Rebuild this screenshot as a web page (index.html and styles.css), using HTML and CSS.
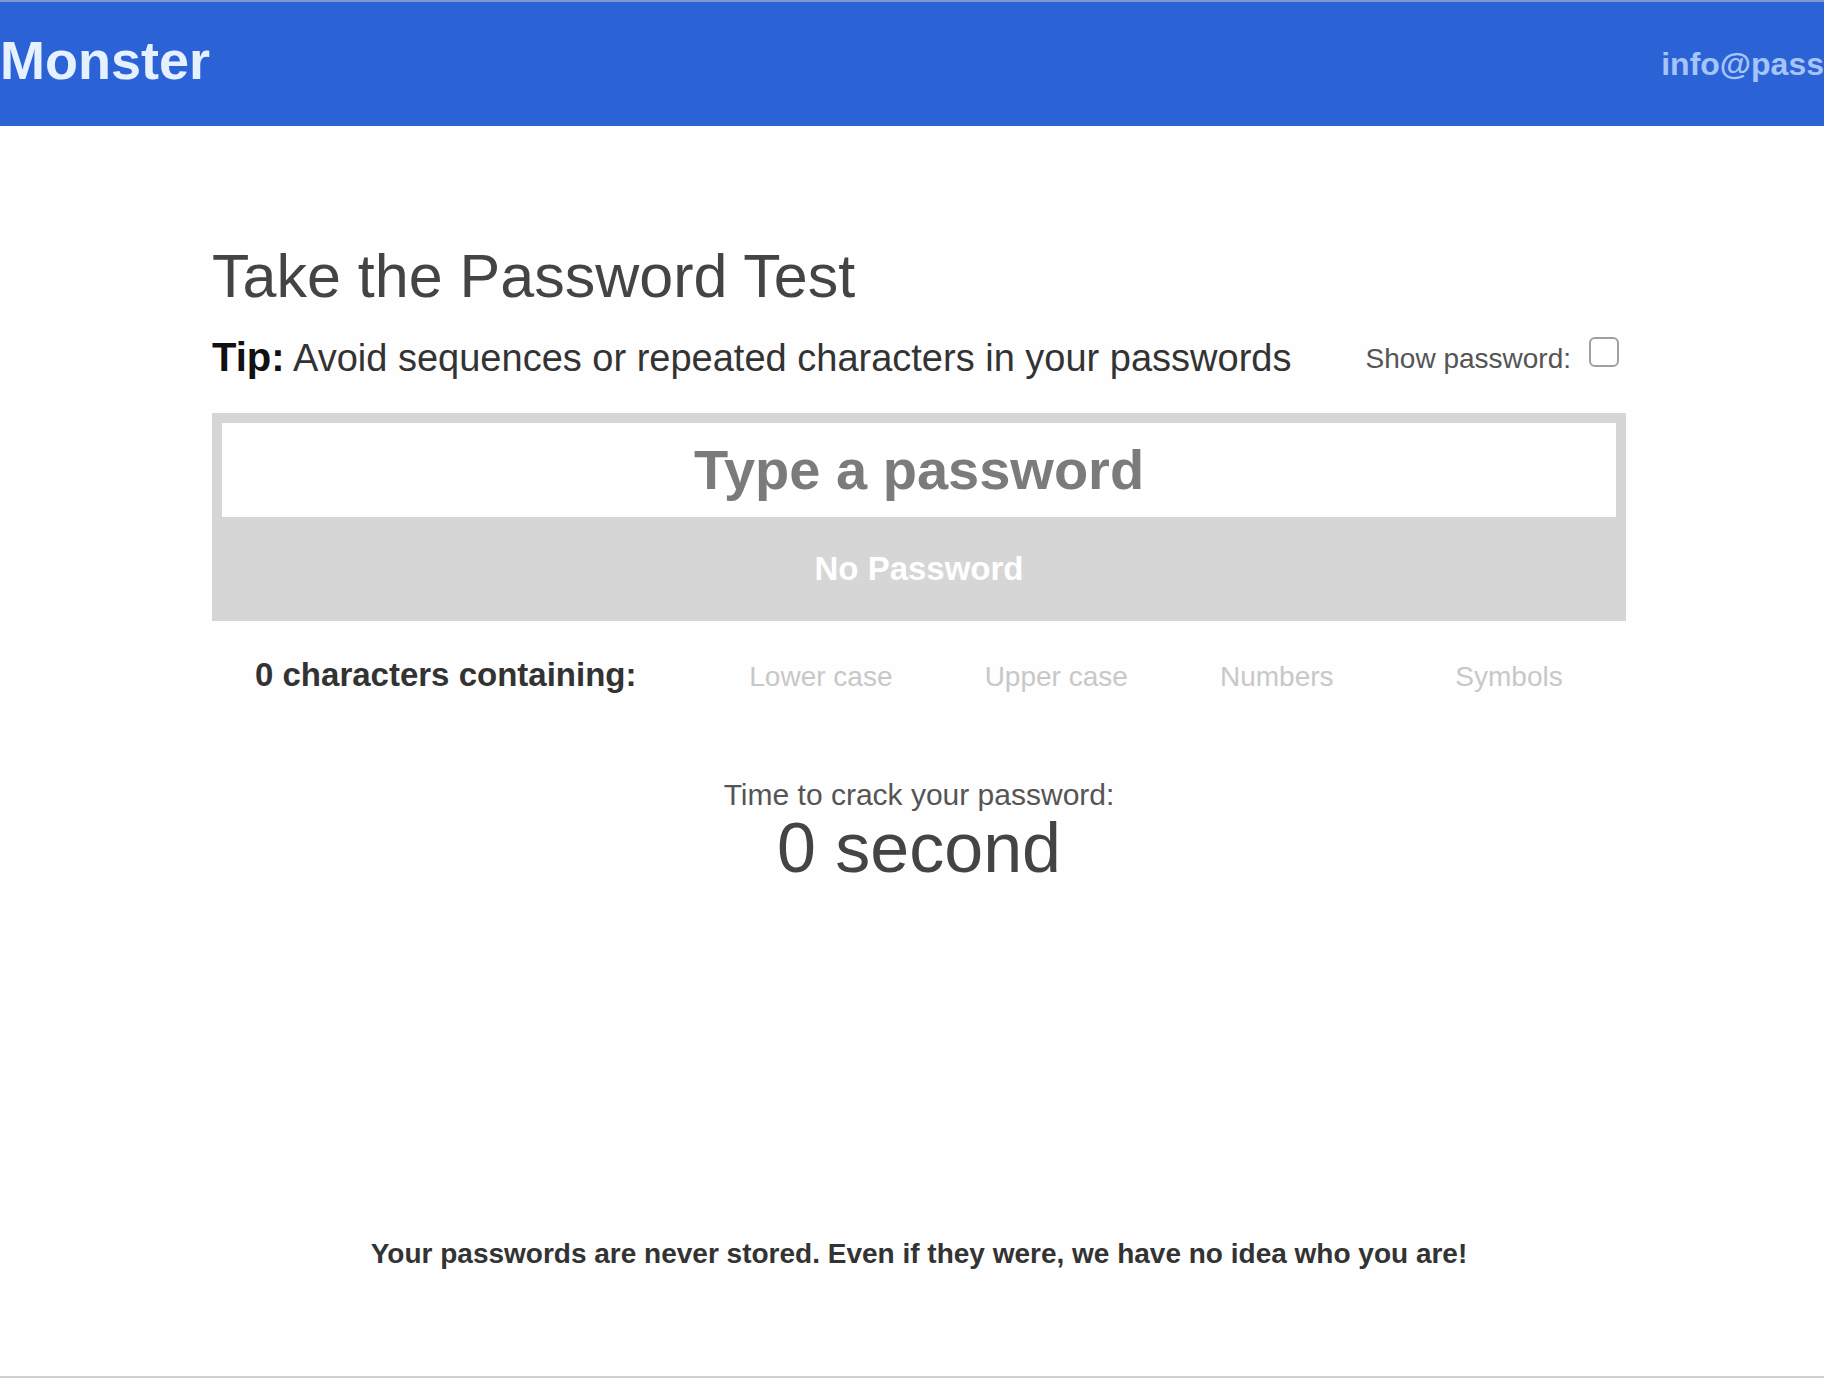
FILE: index.html
```html
<!DOCTYPE html>
<html lang="en">

<head>
    <meta charset="UTF-8">
    <meta name="viewport" content="width=device-width, initial-scale=1.0">
    <title>Password Monster</title>
    <link rel="stylesheet" href="styles.css">
</head>

<body>
    <header class="header">
        <a class="logo" href="#">Monster</a>
        <a class="contact" href="#">info@pass</a>
    </header>

    <main class="content">
        <h1 class="heading">Take the Password Test</h1>

        <div class="tip-row">
            <p class="tip"><strong>Tip:</strong> Avoid sequences or repeated characters in your passwords</p>
            <label class="show-password" for="show">
                Show password:
                <input type="checkbox" class="checkbox" id="show">
            </label>
        </div>

        <div class="meter">
            <input type="password" class="password" id="password" placeholder="Type a password" aria-label="Type a password">
            <div class="strength">No Password</div>
        </div>

        <div class="stats">
            <strong class="count">0 characters containing:</strong>
            <span>Lower case</span>
            <span>Upper case</span>
            <span>Numbers</span>
            <span>Symbols</span>
        </div>

        <div class="result">
            <p class="result-label">Time to crack your password:</p>
            <p class="result-time">0 second</p>
        </div>

        <p class="note">Your passwords are never stored. Even if they were, we have no idea who you are!</p>
    </main>
</body>

</html>
```

FILE: styles.css
```css
* {
    margin: 0;
    padding: 0;
    box-sizing: border-box;
}

body {
    display: flex;
    flex-direction: column;
    min-height: 100vh;
    overflow-x: hidden;
    font-family: "Liberation Sans", Arial, sans-serif;
    color: #444;
    background: #fefefe;
    border-top: 2px solid #8098d0;
    border-bottom: 2px solid #cfcfcf;
}

/* Header */
.header {
    display: flex;
    justify-content: space-between;
    align-items: center;
    height: 124px;
    background: #2b63d6;
}

.header a {
    text-decoration: none;
    font-weight: bold;
}

.logo {
    padding-bottom: 9px;
    font-size: 54px;
    color: #e6f1ff;
}

.contact {
    font-size: 32px;
    color: #a6c4f8;
}

/* Main column */
.content {
    flex: 1;
    display: flex;
    flex-direction: column;
    padding: 115px 198px 104px 212px;
}

.heading {
    font-size: 61px;
    line-height: 70px;
    font-weight: normal;
}

.tip-row {
    display: flex;
    justify-content: space-between;
    align-items: flex-start;
    margin: 22px 0 31px;
    line-height: 48px;
}

.tip {
    font-size: 38px;
    color: #333;
}

.tip strong {
    font-size: 40px;
    color: #111;
}

.show-password {
    display: flex;
    align-items: flex-start;
    gap: 18px;
    padding: 4px 7px 0 0;
    font-size: 28px;
    line-height: 44px;
    color: #555;
}

.checkbox {
    appearance: none;
    width: 30px;
    height: 30px;
    border: 2px solid #a0a0a0;
    border-radius: 6px;
    background: #fff;
}

.checkbox:checked {
    background: #2b63d6;
}

/* Password box */
.meter {
    border: 10px solid #d6d6d6;
    border-bottom: 0;
    background: #d6d6d6;
}

.password {
    display: block;
    width: 100%;
    height: 94px;
    padding-bottom: 2px;
    border: none;
    outline: none;
    background: #fff;
    font-family: inherit;
    font-size: 56px;
    font-weight: bold;
    text-align: center;
    color: #444;
}

.password::placeholder {
    color: #7b7b7b;
}

.strength {
    line-height: 104px;
    font-size: 33px;
    font-weight: bold;
    text-align: center;
    color: #fff;
}

/* Character types */
.stats {
    display: grid;
    grid-template-columns: 84fr 40fr 40fr 40fr 29fr;
    align-items: baseline;
    margin-top: 34px;
    padding-left: 43px;
    line-height: 40px;
    font-size: 28px;
    color: #c8c8c8;
}

.count {
    font-size: 33px;
    color: #333;
}

/* Result */
.result {
    margin-top: 80px;
    text-align: center;
}

.result-label {
    font-size: 30px;
    line-height: 36px;
    color: #555;
}

.result-time {
    font-size: 70px;
    line-height: 70px;
}

.note {
    margin-top: auto;
    font-size: 28px;
    line-height: 36px;
    font-weight: bold;
    text-align: center;
    color: #333;
}
```
